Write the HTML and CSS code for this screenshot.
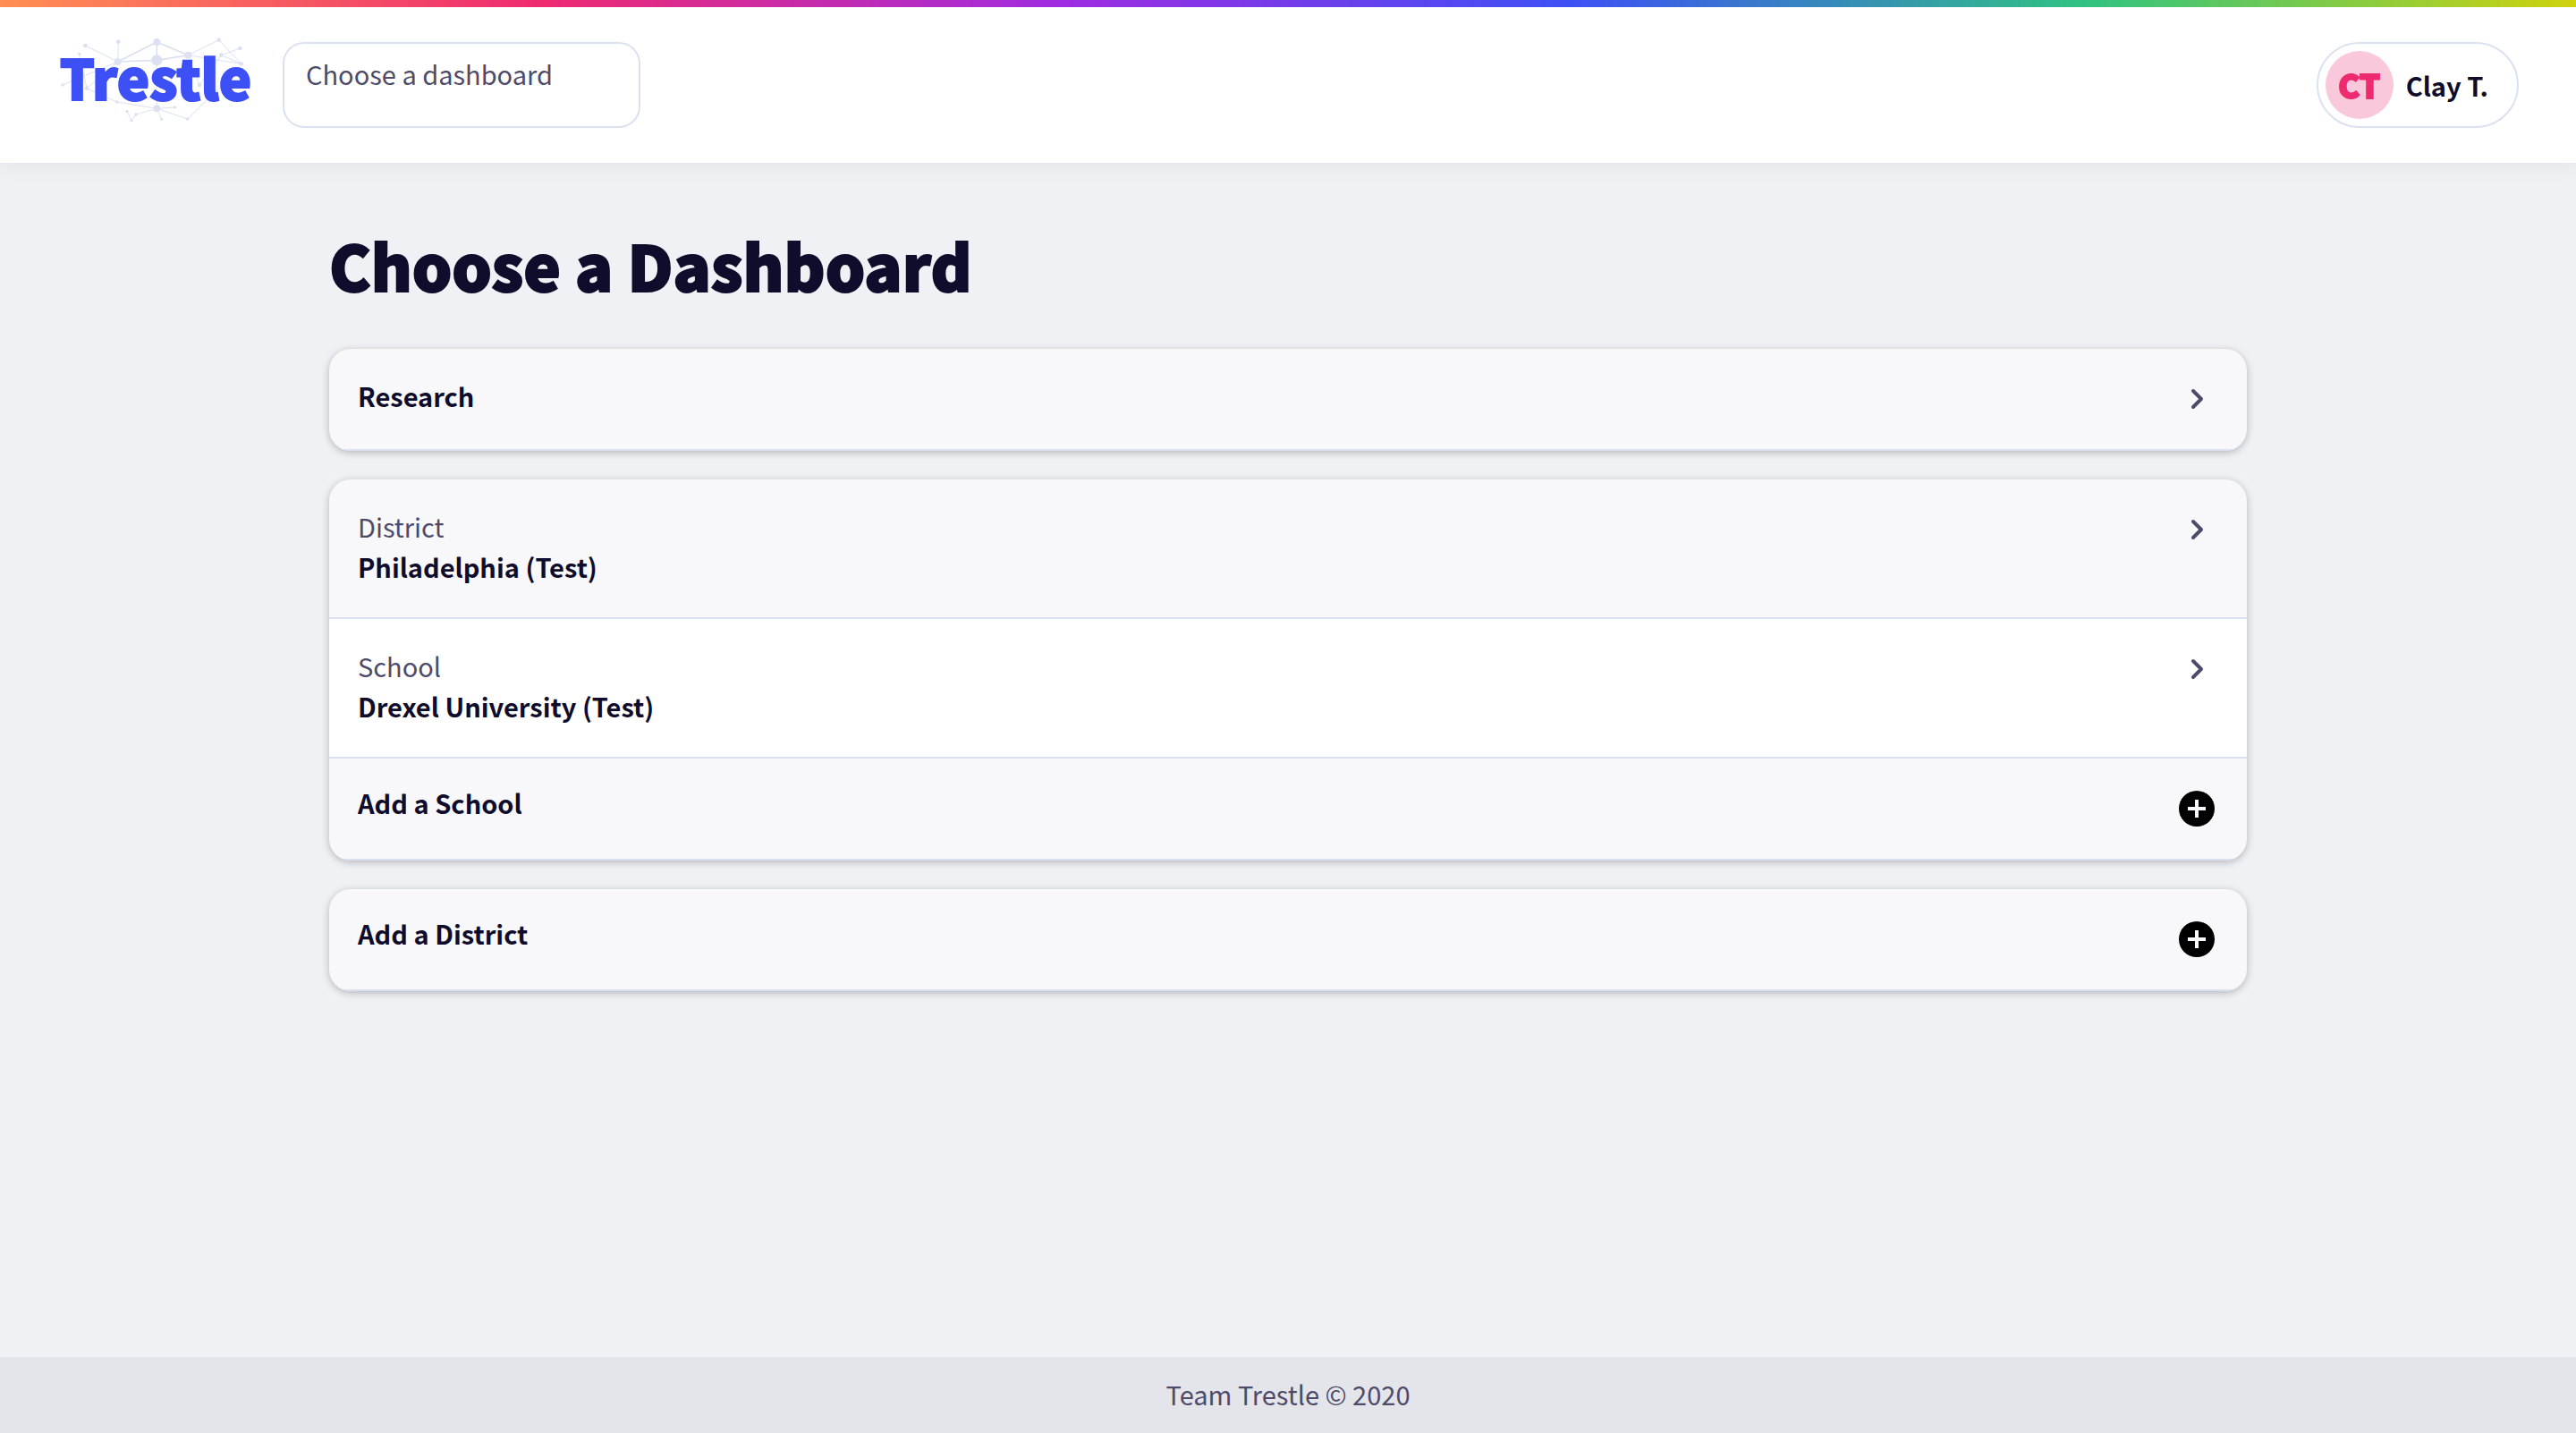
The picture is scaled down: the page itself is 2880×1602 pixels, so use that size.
FILE: index.html
```html
<!DOCTYPE html>
<html lang="en">
<head>
<meta charset="utf-8">
<meta name="viewport" content="width=device-width, initial-scale=1">
<title>Choose a Dashboard – Trestle</title>
<link rel="stylesheet" href="styles.css">
</head>
<body>
<header class="header">
  <a class="logo" href="#" aria-label="Trestle home">
    <svg class="logo-art" viewBox="42 51 660 288">
      <g class="logo-net">
        <path class="logo-beam" d="M245 117L376 51L481 95L376 112ZM376 51V112"/>
        <path d="M136 63L245 117L247 50M60 195L245 117L141 206L116 91M141 206L242 252L376 274L436 270M481 95L584 44L659 124L481 95L519 195L592 95L655 72M592 95L659 124M600 190L479 309L376 274L392 310M376 112V274L306 294L291 314L276 283"/>
        <circle cx="376" cy="51" r="12"/><circle cx="376" cy="112" r="18"/><circle cx="245" cy="117" r="12"/><circle cx="481" cy="95" r="12"/><circle cx="376" cy="274" r="12"/>
        <circle cx="136" cy="63" r="7"/><circle cx="247" cy="50" r="7"/><circle cx="584" cy="44" r="7"/><circle cx="655" cy="72" r="7"/><circle cx="592" cy="95" r="7"/><circle cx="659" cy="124" r="7"/><circle cx="141" cy="206" r="7"/><circle cx="519" cy="195" r="7"/>
        <circle cx="116" cy="91" r="5"/><circle cx="60" cy="195" r="5"/><circle cx="242" cy="252" r="5"/><circle cx="436" cy="270" r="5"/><circle cx="276" cy="283" r="5"/><circle cx="291" cy="314" r="5"/><circle cx="306" cy="294" r="5"/><circle cx="392" cy="310" r="5"/><circle cx="479" cy="309" r="5"/>
      </g>
      <text class="logo-word" x="372" y="246">Trestle</text>
    </svg>
  </a>
  <select class="picker" aria-label="Dashboard">
    <option>Choose a dashboard</option>
  </select>
  <button class="user" type="button">
    <span class="avatar">CT</span>
    <span>Clay T.</span>
  </button>
</header>

<main class="main">
  <h1 class="title">Choose a Dashboard</h1>
  <section class="card">
    <a class="row" href="#">
      <span class="label"><strong>Research</strong></span>
      <svg class="icon chevron" viewBox="0 0 48 48"><path d="M20 15l9 9-9 9"/></svg>
    </a>
  </section>
  <section class="card">
    <a class="row" href="#">
      <span class="label"><span class="kind">District</span><strong>Philadelphia (Test)</strong></span>
      <svg class="icon chevron" viewBox="0 0 48 48"><path d="M20 15l9 9-9 9"/></svg>
    </a>
    <a class="row row-child" href="#">
      <span class="label"><span class="kind">School</span><strong>Drexel University (Test)</strong></span>
      <svg class="icon chevron" viewBox="0 0 48 48"><path d="M20 15l9 9-9 9"/></svg>
    </a>
    <button class="row row-add" type="button">
      <span class="label"><strong>Add a School</strong></span>
      <svg class="icon" viewBox="0 0 24 24"><path d="M12 2a10 10 0 1 0 0 20 10 10 0 0 0 0-20zm5 11h-4v4h-2v-4H7v-2h4V7h2v4h4z"/></svg>
    </button>
  </section>
  <section class="card">
    <button class="row row-add" type="button">
      <span class="label"><strong>Add a District</strong></span>
      <svg class="icon" viewBox="0 0 24 24"><path d="M12 2a10 10 0 1 0 0 20 10 10 0 0 0 0-20zm5 11h-4v4h-2v-4H7v-2h4V7h2v4h4z"/></svg>
    </button>
  </section>
</main>

<footer class="footer">Team Trestle © 2020</footer>
</body>
</html>
```
FILE: styles.css
```css
:root {
  --ink: #0f0d2b;
  --muted: #4d4b69;
  --line: #dce1f2;
  --blue: #3d50f5;
  --pink: #ee2a70;
}

* { box-sizing: border-box; }

body {
  margin: 0;
  min-height: 100vh;
  display: flex;
  flex-direction: column;
  background: #f0f1f5;
  color: var(--ink);
  font: 400 29px/41px "Noto Sans CJK SC", "Noto Sans", sans-serif;
}

select, button { font: inherit; color: inherit; }

.header {
  position: relative;
  display: flex;
  align-items: center;
  gap: 32px;
  padding: 47px 64px 39px;
  background:
    linear-gradient(90deg, #ff8f52, #ef2a70 21%, #a02be0 41%, #3d50f5 61%, #30c381 81%, #d0d20c) top / 100% 8px no-repeat,
    #fff;
  box-shadow: 0 0 24px rgba(0, 0, 0, 0.08);
}

.logo { display: block; }
.logo-art { display: block; width: 220px; height: 96px; overflow: visible; }
.logo-net { fill: var(--line); stroke: none; }
.logo-net path { fill: none; stroke: var(--line); stroke-width: 3; }
.logo-net .logo-beam { stroke-width: 5; }
.logo-word {
  fill: var(--blue);
  stroke: var(--blue);
  stroke-width: 6px;
  font-size: 184px;
  font-weight: 900;
  text-anchor: middle;
}

.picker {
  appearance: none;
  width: 400px;
  padding: 13px 24px 38px;
  border: 2px solid var(--line);
  border-radius: 24px;
  background: #fff;
  color: var(--muted);
}

.user {
  display: flex;
  align-items: center;
  gap: 14px;
  margin-left: auto;
  padding: 8px 32px 8px 8px;
  border: 2px solid var(--line);
  border-radius: 48px;
  background: #fff;
  font-weight: 700;
  line-height: 38px;
}

.avatar {
  width: 76px;
  height: 76px;
  border-radius: 50%;
  background: #fac8db;
  color: var(--pink);
  font-size: 36px;
  font-weight: 900;
  line-height: 74px;
  text-align: center;
  -webkit-text-stroke: 2px var(--pink);
}

.main {
  flex: 1;
  display: flex;
  flex-direction: column;
  gap: 32px;
  width: calc(100% - 128px);
  max-width: 2144px;
  margin: 0 auto;
  padding: 70px 0 64px;
}

.title {
  margin: 0 0 18px;
  font-size: 70px;
  font-weight: 900;
  line-height: 88px;
  -webkit-text-stroke: 2px var(--ink);
}

.card {
  overflow: hidden;
  border-radius: 24px;
  background: #f8f8fb;
  box-shadow: 0 2px 8px rgba(0, 0, 0, 0.25);
}

.row {
  display: flex;
  justify-content: space-between;
  align-items: flex-start;
  width: 100%;
  padding: 32px;
  border: 0;
  border-bottom: 2px solid var(--line);
  background: transparent;
  color: inherit;
  text-align: left;
  text-decoration: none;
}

.row-child { background: #fff; }

.label { display: grid; gap: 4px; padding-bottom: 4px; }
.row-add .label { line-height: 35px; }
.kind { color: var(--muted); }

.icon { flex: none; width: 48px; height: 48px; fill: #000; }
.chevron { fill: none; stroke: var(--muted); stroke-width: 4; stroke-linecap: round; stroke-linejoin: round; }

.footer {
  padding: 21px 22px 23px;
  background: #e4e5eb;
  color: var(--muted);
  text-align: center;
}
```
